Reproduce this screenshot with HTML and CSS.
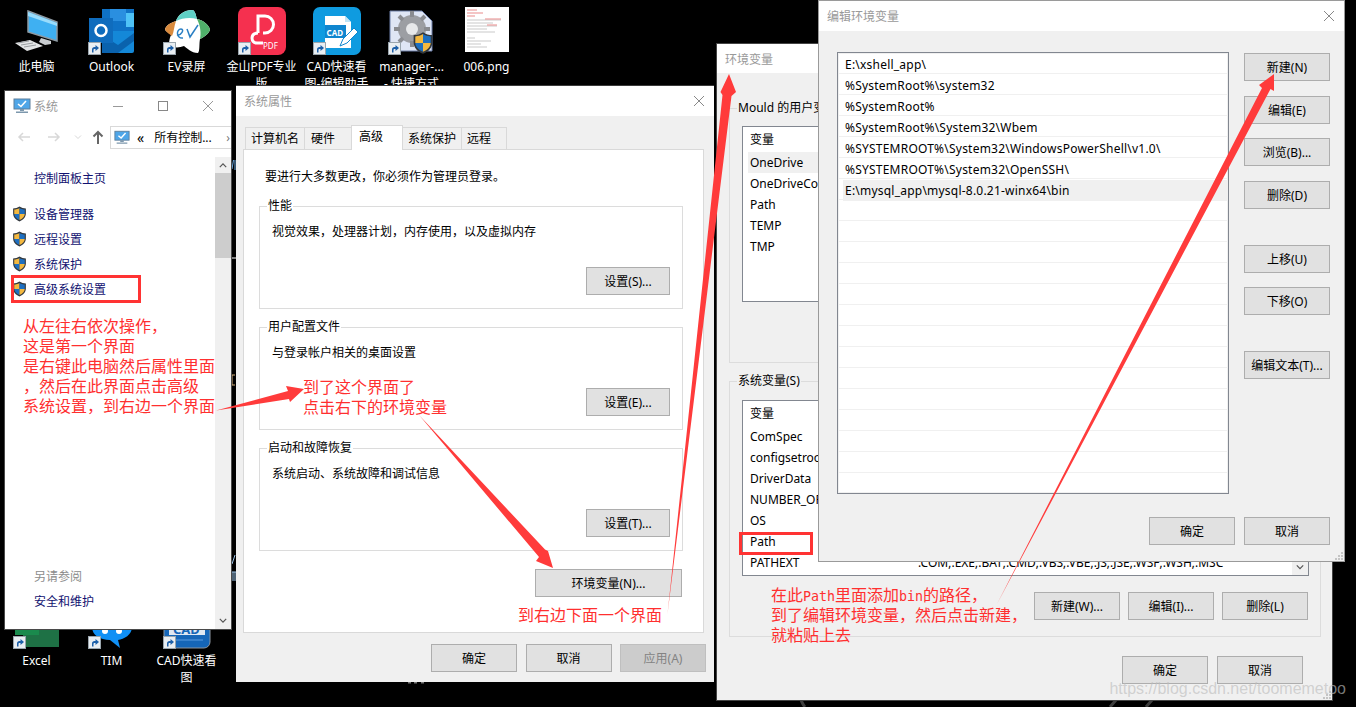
FILE: index.html
```html
<!DOCTYPE html>
<html lang="zh-CN">
<head>
    <meta charset="UTF-8">
    <title>系统属性 - 环境变量</title>
    <link rel="stylesheet" href="styles.css">
</head>
<body>
<svg class="defs" width="0" height="0">
    <defs>
        <symbol id="shield" viewBox="0 0 16 17">
            <path d="M8 .6C6 2 3.600 2.700 1.200 2.700V8c0 4 2.800 6.800 6.800 8.400 4-1.600 6.800-4.400 6.800-8.400V2.700C12.400 2.700 10 2 8 .6z" fill="#33383d"/>
            <path d="M8 2v6.500H2.400V3.700C4.400 3.600 6.400 3 8 2z" fill="#f4b83f"/>
            <path d="M8 2c1.600 1 3.600 1.600 5.600 1.700v4.800H8z" fill="#1e6fc0"/>
            <path d="M2.400 8.500H8v6.400C4.800 13.500 2.600 11.500 2.400 8.500z" fill="#1e6fc0"/>
            <path d="M8 8.500h5.600c-.2 3-2.400 5-5.600 6.400z" fill="#f4b83f"/>
        </symbol>
        <symbol id="monitor" viewBox="0 0 18 16">
            <rect x="1" y="1" width="16" height="10" fill="#4fa6e8" stroke="#5d7f9c"/>
            <path d="M5 6l3 2.500L13 3" fill="none" stroke="#fff" stroke-width="1.600"/>
            <path d="M7 11h4v2H7zM3 13.500h12v1.500H3z" fill="#7d98ad"/>
        </symbol>
        <symbol id="shortcut" viewBox="0 0 13 13">
            <rect x=".5" y=".5" width="12" height="12" fill="#e9eef2" stroke="#9aa5ad"/>
            <path d="M4 10.500V7.500c0-1.500 1-2.500 2.500-2.500H7.500V3l3.500 3-3.500 3V7H6.500C5.800 7 5.500 7.500 5.500 8.200v2.300z" fill="#1c5fa8"/>
        </symbol>
    </defs>
</svg>

<div class="desktop">
    <!-- bits of the wallpaper and of other icons that show between the windows -->
    <svg class="wallpaper" viewBox="0 0 1356 707">
        <path d="M233.500 160l-1.500 9M235 160v10" stroke="#6aa8e0" fill="none"/>
        <path d="M232 258h4" stroke="#fff"/>
        <path d="M235 375h-3v10h3" stroke="#d9b27a" fill="none"/>
        <path d="M235 555l-3 9M232 572h4M233 572v9M235 572v9" stroke="#9cc4e8" fill="none"/>
        <path d="M408 682.800h3M414 682.800h3M421 682.800h3" stroke="#777" stroke-width="1.500"/>
        <path d="M801 700c1 2 2 5 4 7" stroke="#3d3d3d" stroke-width="3" fill="none"/>
        <path d="M1116 700l-6 7M1152 700l-6 7" stroke="#3d3d3d" stroke-width="3" fill="none"/>
    </svg>

    <!-- desktop icons, top row -->
    <div class="icon-grid icon-grid-top">
        <div class="desk-icon">
            <svg class="desk-pic" viewBox="0 0 48 48">
                <path d="M15 4l29 11v19L15 25z" fill="#3fb0f2" stroke="#8e9aa3" stroke-width="1.500"/>
                <path d="M15 5l29 11v3L15 9z" fill="#9adcfb"/>
                <path d="M28 31l10 3v3l-6 1-6-3z" fill="#c9cdd0"/>
                <path d="M2 36l15-3 13 6-16 5z" fill="#e3e5e6"/>
                <path d="M5 36l11-2M8 38l12-2M11 40l12-2" stroke="#9a9ea1"/>
            </svg>
            <span class="desk-label">此电脑</span>
        </div>
        <div class="desk-icon">
            <svg class="desk-pic" viewBox="0 0 48 48">
                <rect x="14" y="2" width="32" height="24" fill="#0f72c6"/>
                <rect x="22" y="2" width="16" height="12" fill="#2a8fe0"/>
                <rect x="38" y="6" width="8" height="14" fill="#4fc3f7"/>
                <path d="M14 24h32v20a2 2 0 0 1-2 2H14z" fill="#1488d8"/>
                <path d="M14 28l16 10 16-12v8L30 46H14z" fill="#0a62ad"/>
                <rect x="1" y="11" width="24" height="25" fill="#0f6cbd"/>
                <circle cx="13" cy="23.500" r="5.500" fill="none" stroke="#fff" stroke-width="2.500"/>
            </svg>
            <svg class="desk-badge"><use href="#shortcut"/></svg>
            <span class="desk-label">Outlook</span>
        </div>
        <div class="desk-icon">
            <svg class="desk-pic" viewBox="0 0 48 48">
                <path d="M30 3c3 2 3 7 4 9 5 1 12 5 13 11-2 5-8 8-10 9-1 5 0 12-2 14-7 0-11-5-14-7-5 2-11 2-15-1 0-6 2-10 3-12C6 27 2 24 2 22c2-5 8-7 11-8 2-5 6-11 17-11z" fill="#fff"/>
                <path d="M2 22c2-5 8-7 11-8-2 5-2 11-4 15-3-2-7-5-7-7z" fill="#d98a3d"/>
                <path d="M37 32c1-5 1-12-3-20 5 1 12 5 13 11-2 5-8 8-10 9z" fill="#4fb06a"/>
                <path d="M30 3c3 2 3 7 4 9-7-2-15-1-21 2 2-5 6-11 17-11z" fill="#5fd0c5"/>
                <path d="M14 28c4 1 8-6 4-6-5 0-5 10 2 9M24 22l3 8 8-12" fill="none" stroke="#2a7fc4" stroke-width="1.500"/>
            </svg>
            <svg class="desk-badge"><use href="#shortcut"/></svg>
            <span class="desk-label">EV录屏</span>
        </div>
        <div class="desk-icon">
            <svg class="desk-pic" viewBox="0 0 48 48">
                <rect width="48" height="48" rx="8" fill="#f5304f"/>
                <path d="M20 26V9h7a8.500 8.500 0 0 1 0 17h-2" fill="none" stroke="#fff" stroke-width="3"/>
                <path d="M20 26c-4 0-6 2-6 5s2 5 5 5h6" fill="none" stroke="#fff" stroke-width="3"/>
                <text class="pic-pdf" x="25" y="42">PDF</text>
            </svg>
            <svg class="desk-badge"><use href="#shortcut"/></svg>
            <span class="desk-label">金山PDF专业版</span>
        </div>
        <div class="desk-icon">
            <svg class="desk-pic" viewBox="0 0 48 48">
                <rect width="48" height="48" rx="7" fill="#0f9be0"/>
                <path d="M12 9h20l6 6v26H12z" fill="#fff"/>
                <path d="M32 9v6h6z" fill="#bfe3f6"/>
                <rect x="12" y="18" width="21" height="13" fill="#0f86cf"/>
                <text class="pic-cad" x="13.500" y="28.500">CAD</text>
                <path d="M27 39l3-7 11-11 4 4-11 11z" fill="#fff" stroke="#0f86cf"/>
            </svg>
            <svg class="desk-badge"><use href="#shortcut"/></svg>
            <span class="desk-label">CAD快速看图-编辑助手</span>
        </div>
        <div class="desk-icon">
            <svg class="desk-pic" viewBox="0 0 48 48">
                <path d="M2 4h32l10 10v30H2z" fill="#dfe6f5" stroke="#6d7ea8"/>
                <circle cx="24" cy="22" r="14" fill="#9c9ea3"/>
                <circle cx="24" cy="22" r="6" fill="#e7e8ea"/>
                <path d="M24 4v6M24 34v6M6 22h6M36 22h6M11 9l4 4M33 31l4 4M37 9l-4 4M15 31l-4 4" stroke="#8a8c91" stroke-width="4"/>
                <use href="#shield" x="24" y="24" width="22" height="24"/>
            </svg>
            <svg class="desk-badge"><use href="#shortcut"/></svg>
            <span class="desk-label">manager-...<br>- 快捷方式</span>
        </div>
        <div class="desk-icon">
            <svg class="desk-pic" viewBox="0 0 48 48">
                <rect x="2" y="0" width="44" height="45" fill="#fff"/>
                <path d="M4 3h10M4 6h16M4 9h8" stroke="#e98b8b"/>
                <path d="M4 13h34M4 16h26M4 19h30M4 22h20M4 25h28M4 31h8M4 34h24M4 37h14M4 40h20" stroke="#c9c9c9"/>
                <path d="M22 12h16M24 18h10" stroke="#e98b8b"/>
            </svg>
            <span class="desk-label">006.png</span>
        </div>
    </div>

    <!-- desktop icons, bottom row -->
    <div class="icon-grid icon-grid-bottom">
        <div class="desk-icon">
            <svg class="desk-pic" viewBox="0 0 48 48">
                <rect x="10" y="0" width="36" height="46" fill="#1e7145"/>
                <rect x="28" y="12" width="18" height="10" fill="#27915a"/>
                <rect x="2" y="6" width="24" height="28" fill="#1a8a4d"/>
            </svg>
            <svg class="desk-badge"><use href="#shortcut"/></svg>
            <span class="desk-label">Excel</span>
        </div>
        <div class="desk-icon">
            <svg class="desk-pic" viewBox="0 0 48 48">
                <path d="M4 26C4 12 12 2 24 2s20 10 20 24c0 8-8 12-14 13l2 8-10-8C12 39 4 34 4 26z" fill="#1090f5"/>
                <circle cx="17" cy="30" r="3" fill="#fff"/>
                <circle cx="31" cy="30" r="3" fill="#fff"/>
            </svg>
            <svg class="desk-badge"><use href="#shortcut"/></svg>
            <span class="desk-label">TIM</span>
        </div>
        <div class="desk-icon">
            <svg class="desk-pic" viewBox="0 0 48 48">
                <rect x="1" y="0" width="46" height="47" rx="6" fill="#1566b8" stroke="#8d96a0"/>
                <rect x="6" y="22" width="36" height="12" fill="#dfe8f2"/>
                <text class="pic-cad-big" x="10" y="33">CAD</text>
                <path d="M8 39h32" stroke="#5b9be0"/>
            </svg>
            <svg class="desk-badge"><use href="#shortcut"/></svg>
            <span class="desk-label">CAD快速看<br>图</span>
        </div>
    </div>

    <!-- 系统 -->
    <section class="win win-system">
        <header class="titlebar titlebar-system">
            <svg class="title-icon"><use href="#monitor"/></svg>
            <span class="title">系统</span>
            <span class="caption-btns">
                <svg class="cap-icon" viewBox="0 0 12 12"><path d="M1 6.500h10" stroke="#999"/></svg>
                <svg class="cap-icon" viewBox="0 0 12 12"><rect x="1.500" y="1.500" width="9" height="9" fill="none" stroke="#888"/></svg>
                <svg class="cap-icon" viewBox="0 0 12 12"><path d="M1 1l10 10M11 1L1 11" stroke="#999"/></svg>
            </span>
        </header>
        <nav class="navbar">
            <svg class="nav-arrow" viewBox="0 0 14 12"><path d="M13 6H2M6 2L2 6l4 4" fill="none" stroke="#d8d8d8" stroke-width="1.500"/></svg>
            <svg class="nav-arrow" viewBox="0 0 14 12"><path d="M1 6h11M8 2l4 4-4 4" fill="none" stroke="#d8d8d8" stroke-width="1.500"/></svg>
            <svg class="nav-chevron" viewBox="0 0 8 6"><path d="M1 1.500l3 3 3-3" fill="none" stroke="#d8d8d8"/></svg>
            <svg class="nav-up" viewBox="0 0 12 14"><path d="M6 14V2M1.500 6.500L6 2l4.500 4.500" fill="none" stroke="#666" stroke-width="2"/></svg>
            <div class="address">
                <svg class="address-icon"><use href="#monitor"/></svg>
                <span class="crumb-more">«</span>
                <span class="crumb">所有控制...</span>
                <span class="crumb-next">›</span>
            </div>
        </nav>
        <div class="system-body">
            <div class="sidebar">
                <a class="side-home">控制面板主页</a>
                <a class="side-item"><svg class="shield"><use href="#shield"/></svg>设备管理器</a>
                <a class="side-item"><svg class="shield"><use href="#shield"/></svg>远程设置</a>
                <a class="side-item"><svg class="shield"><use href="#shield"/></svg>系统保护</a>
                <a class="side-item"><svg class="shield"><use href="#shield"/></svg>高级系统设置</a>
                <div class="side-foot">
                    <span class="side-seealso">另请参阅</span>
                    <a class="side-link">安全和维护</a>
                </div>
            </div>
            <div class="scrollbar">
                <svg class="scroll-arrow" viewBox="0 0 10 6"><path d="M1 5l4-4 4 4" fill="none" stroke="#555" stroke-width="1.500"/></svg>
                <div class="scroll-thumb"></div>
                <svg class="scroll-arrow scroll-arrow-down" viewBox="0 0 10 6"><path d="M1 1l4 4 4-4" fill="none" stroke="#555" stroke-width="1.500"/></svg>
            </div>
        </div>
    </section>

    <!-- 系统属性 -->
    <section class="win win-props">
        <header class="titlebar">
            <span class="title">系统属性</span>
            <svg class="cap-close" viewBox="0 0 12 12"><path d="M1 1l10 10M11 1L1 11" stroke="#888"/></svg>
        </header>
        <div class="tabs">
            <span class="tab tab-name">计算机名</span>
            <span class="tab tab-hw">硬件</span>
            <span class="tab tab-active">高级</span>
            <span class="tab tab-name">系统保护</span>
            <span class="tab tab-remote">远程</span>
        </div>
        <div class="panel">
            <p class="panel-note">要进行大多数更改，你必须作为管理员登录。</p>
            <fieldset class="group">
                <legend>性能</legend>
                <p class="group-text">视觉效果，处理器计划，内存使用，以及虚拟内存</p>
                <button class="btn group-btn">设置(S)...</button>
            </fieldset>
            <fieldset class="group">
                <legend>用户配置文件</legend>
                <p class="group-text">与登录帐户相关的桌面设置</p>
                <button class="btn group-btn">设置(E)...</button>
            </fieldset>
            <fieldset class="group">
                <legend>启动和故障恢复</legend>
                <p class="group-text">系统启动、系统故障和调试信息</p>
                <button class="btn group-btn">设置(T)...</button>
            </fieldset>
            <div class="env-row">
                <button class="btn btn-env">环境变量(N)...</button>
            </div>
        </div>
        <footer class="props-foot">
            <button class="btn">确定</button>
            <button class="btn">取消</button>
            <button class="btn btn-off">应用(A)</button>
        </footer>
    </section>

    <!-- 环境变量 -->
    <section class="win win-env">
        <header class="titlebar">
            <span class="title">环境变量</span>
        </header>
        <div class="env-body">
            <fieldset class="env-group env-group-user">
                <legend>Mould 的用户变量(U)</legend>
                <div class="var-list var-list-user">
                    <div class="var-row var-head"><span>变量</span></div>
                    <div class="var-row var-picked"><span>OneDrive</span></div>
                    <div class="var-row"><span>OneDriveConsumer</span></div>
                    <div class="var-row"><span>Path</span></div>
                    <div class="var-row"><span>TEMP</span></div>
                    <div class="var-row"><span>TMP</span></div>
                </div>
            </fieldset>
            <fieldset class="env-group env-group-sys">
                <legend>系统变量(S)</legend>
                <div class="var-list var-list-sys">
                    <div class="var-row var-head"><span>变量</span></div>
                    <div class="var-row"><span>ComSpec</span></div>
                    <div class="var-row"><span>configsetroot</span></div>
                    <div class="var-row"><span>DriverData</span></div>
                    <div class="var-row"><span>NUMBER_OF_PROCESSORS</span></div>
                    <div class="var-row"><span>OS</span></div>
                    <div class="var-row"><span>Path</span></div>
                    <div class="var-row"><span>PATHEXT</span><span class="var-val">.COM;.EXE;.BAT;.CMD;.VBS;.VBE;.JS;.JSE;.WSF;.WSH;.MSC</span></div>
                    <svg class="list-down" viewBox="0 0 10 6"><path d="M1 1l4 4 4-4" fill="none" stroke="#555" stroke-width="1.500"/></svg>
                </div>
                <div class="sys-btns">
                    <button class="btn">新建(W)...</button>
                    <button class="btn">编辑(I)...</button>
                    <button class="btn">删除(L)</button>
                </div>
            </fieldset>
            <div class="env-foot">
                <button class="btn">确定</button>
                <button class="btn">取消</button>
            </div>
        </div>
        <svg class="grip" viewBox="0 0 8 8"><path d="M6 0h2v2H6zM3 3h2v2H3zM6 3h2v2H6zM0 6h2v2H0zM3 6h2v2H3zM6 6h2v2H6z" fill="#c4c4c4"/></svg>
    </section>

    <!-- 编辑环境变量 -->
    <section class="win win-edit">
        <header class="titlebar">
            <span class="title">编辑环境变量</span>
            <svg class="cap-close" viewBox="0 0 12 12"><path d="M1 1l10 10M11 1L1 11" stroke="#888"/></svg>
        </header>
        <div class="edit-body">
            <div class="edit-left">
                <div class="path-list">
                    <div class="path-row">E:\xshell_app\</div>
                    <div class="path-row">%SystemRoot%\system32</div>
                    <div class="path-row">%SystemRoot%</div>
                    <div class="path-row">%SystemRoot%\System32\Wbem</div>
                    <div class="path-row">%SYSTEMROOT%\System32\WindowsPowerShell\v1.0\</div>
                    <div class="path-row">%SYSTEMROOT%\System32\OpenSSH\</div>
                    <div class="path-row path-picked">E:\mysql_app\mysql-8.0.21-winx64\bin</div>
                </div>
            </div>
            <div class="edit-side">
                <div class="side-btns">
                    <button class="btn">新建(N)</button>
                    <button class="btn">编辑(E)</button>
                    <button class="btn">浏览(B)...</button>
                    <button class="btn">删除(D)</button>
                </div>
                <div class="side-btns side-btns-move">
                    <button class="btn">上移(U)</button>
                    <button class="btn">下移(O)</button>
                </div>
                <button class="btn btn-text">编辑文本(T)...</button>
            </div>
        </div>
        <div class="edit-foot">
            <button class="btn">确定</button>
            <button class="btn">取消</button>
        </div>
        <svg class="grip" viewBox="0 0 8 8"><path d="M6 0h2v2H6zM3 3h2v2H3zM6 3h2v2H6zM0 6h2v2H0zM3 6h2v2H3zM6 6h2v2H6z" fill="#c4c4c4"/></svg>
    </section>

    <!-- red marks drawn on the screenshot -->
    <div class="mark-box mark-box-adv"></div>
    <div class="mark-box mark-box-path"></div>

    <svg class="arrows" viewBox="0 0 1356 707">
        <path d="M216 410.500L288 391 286 386 304 389 290 402 289 399z"/>
        <path d="M419 415L545 549.500 548 551 553 568 536 561 539 557z"/>
        <path d="M667.500 614L722.500 95 720.500 92 729 74 736 92 731.500 96z"/>
        <path d="M997 604L1262 88 1259 85 1274 74 1274 91 1270.500 89z"/>
    </svg>

    <p class="note note-first">从左往右依次操作，<br>这是第一个界面<br>是右键此电脑然后属性里面<br>，然后在此界面点击高级<br>系统设置，到右边一个界面</p>
    <p class="note note-second">到了这个界面了<br>点击右下的环境变量</p>
    <p class="note note-third">到右边下面一个界面</p>
    <p class="note note-fourth">在此<span class="note-mono">Path</span>里面添加<span class="note-mono">bin</span>的路径，<br>到了编辑环境变量，然后点击新建，<br>就粘贴上去</p>

    <span class="watermark">https://blog.csdn.net/toomemetoo</span>
</div>
</body>
</html>
```

FILE: styles.css
```css
* {
    box-sizing: border-box;
}
html, body {
    margin: 0;
    height: 100%;
    background: #000;
    overflow: hidden;
}
body {
    font-family: "Noto Sans", "Noto Sans CJK SC", sans-serif;
    font-size: 12px;
    color: #000;
}
p {
    margin: 0;
}
.defs {
    position: absolute;
}
.desktop {
    position: relative;
    width: 1356px;
    height: 707px;
    overflow: hidden;
    background: #000;
}
.wallpaper {
    position: absolute;
    left: 0;
    top: 0;
    width: 1356px;
    height: 707px;
}

/* desktop icons */
.icon-grid {
    position: absolute;
    left: -1px;
    display: flex;
}
.icon-grid-top {
    top: 7px;
}
.icon-grid-bottom {
    top: 601px;
}
.desk-icon {
    position: relative;
    width: 75px;
    display: flex;
    flex-direction: column;
    align-items: center;
}
.desk-pic {
    width: 48px;
    height: 48px;
}
.desk-badge {
    position: absolute;
    left: 14px;
    top: 35px;
    width: 13px;
    height: 13px;
}
.desk-label {
    width: 75px;
    margin-top: 3px;
    color: #fff;
    text-align: center;
    line-height: 17px;
}
.pic-pdf {
    font-size: 8px;
    fill: #fff;
}
.pic-cad {
    font-size: 8px;
    font-weight: bold;
    fill: #fff;
}
.pic-cad-big {
    font-size: 13px;
    font-weight: bold;
    fill: #1566b8;
}

/* windows */
.win {
    position: absolute;
    display: flex;
    flex-direction: column;
    background: #f0f0f0;
}
.win-system {
    left: 4px;
    top: 90px;
    width: 228px;
    height: 540px;
    background: #fff;
    border: 1px solid #4a4a4a;
}
.win-props {
    left: 236px;
    top: 85px;
    width: 478px;
    height: 597px;
    border-top: 1px solid #3a3a3a;
}
.win-env {
    left: 716px;
    top: 43px;
    width: 617px;
    height: 658px;
    border: 1px solid #444;
}
.win-env .titlebar {
    height: 29px;
}
.win-edit {
    left: 818px;
    top: 0;
    width: 527px;
    height: 562px;
    border: 1px solid #9a9a9a;
}
.win-edit .titlebar {
    padding-bottom: 1px;
}
.titlebar {
    flex: none;
    height: 30px;
    padding: 0 8px;
    display: flex;
    align-items: center;
    background: #fff;
}
.title {
    color: #999;
}
.cap-close {
    width: 12px;
    height: 12px;
    margin-left: auto;
    margin-right: 1px;
}
.btn {
    flex: none;
    width: 86px;
    height: 28px;
    padding: 0;
    border: 1px solid #adadad;
    background: #e1e1e1;
    font: inherit;
    color: #000;
}
.btn-off {
    background: #cccccc;
    border-color: #bfbfbf;
    color: #838383;
}
.grip {
    position: absolute;
    right: 1px;
    bottom: 1px;
    width: 8px;
    height: 8px;
}

/* 系统 window */
.titlebar-system {
    padding: 0 0 1px 8px;
}
.title-icon {
    width: 18px;
    height: 16px;
    margin-right: 3px;
}
.caption-btns {
    margin-left: auto;
    display: flex;
    gap: 33px;
    padding-right: 17px;
}
.cap-icon {
    width: 12px;
    height: 12px;
}
.navbar {
    flex: none;
    height: 36px;
    padding-bottom: 4px;
    padding-left: 12px;
    display: flex;
    align-items: center;
}
.nav-arrow {
    width: 14px;
    height: 12px;
    margin-right: 16px;
}
.nav-chevron {
    width: 8px;
    height: 6px;
    margin-left: -3px;
    margin-right: 10px;
}
.nav-up {
    width: 12px;
    height: 14px;
    margin-right: 6px;
}
.address {
    flex: 1;
    height: 23px;
    display: flex;
    align-items: center;
    border: 1px solid #d9d9d9;
    border-right: 0;
    padding-left: 3px;
}
.address-icon {
    width: 16px;
    height: 15px;
    margin-right: 7px;
}
.crumb-more {
    font-size: 14px;
    margin-right: 10px;
}
.crumb-next {
    margin-left: auto;
    margin-right: 1px;
    color: #777;
}
.system-body {
    flex: 1;
    display: flex;
    min-height: 0;
}
.sidebar {
    flex: 1;
    display: flex;
    flex-direction: column;
    color: #111170;
    padding-top: 14px;
    padding-left: 7px;
}
.side-home {
    padding-left: 22px;
    height: 16px;
    line-height: 16px;
    margin-bottom: 14px;
}
.side-item {
    height: 25px;
    display: flex;
    align-items: center;
}
.shield {
    width: 15px;
    height: 16px;
    margin-right: 7px;
}
.side-foot {
    margin-top: auto;
    padding: 0 0 19px 22px;
    display: flex;
    flex-direction: column;
    gap: 9px;
}
.side-seealso {
    color: #8c8c8c;
    line-height: 16px;
}
.side-link {
    line-height: 16px;
}
.scrollbar {
    flex: none;
    width: 16px;
    background: #f0f0f0;
    display: flex;
    flex-direction: column;
    align-items: center;
}
.scroll-arrow {
    flex: none;
    width: 8px;
    height: 5px;
    margin: 6px 0 5px;
}
.scroll-arrow-down {
    margin: auto 0 6px;
}
.scroll-thumb {
    width: 16px;
    height: 85px;
    background: #cdcdcd;
}

/* 系统属性 window */
.tabs {
    flex: none;
    display: flex;
    align-items: flex-end;
    height: 33px;
    padding-left: 10px;
}
.tab {
    height: 22px;
    line-height: 20px;
    padding: 1px 0 0 5px;
    border: 1px solid #d9d9d9;
    border-bottom: 0;
    margin-left: -1px;
}
.tab-name {
    width: 60px;
}
.tab-hw {
    width: 48px;
    padding-left: 6px;
}
.tab-remote {
    width: 46px;
}
.tab-active {
    position: relative;
    z-index: 1;
    width: 52px;
    height: 25px;
    padding: 0 0 0 7px;
    margin-bottom: -1px;
    background: #fff;
    line-height: 22px;
}
.panel {
    flex: none;
    width: 461px;
    height: 484px;
    margin-left: 7px;
    padding: 19px 21px 0 15px;
    background: #fff;
    border: 1px solid #d9d9d9;
}
.panel-note {
    padding-left: 6px;
    line-height: 16px;
    margin-bottom: 13px;
}
.group {
    margin: 0 0 10px;
    padding: 0;
    width: 424px;
    height: 111px;
    border: 1px solid #dcdcdc;
}
.group:last-of-type {
    margin-bottom: 0;
}
.group legend {
    margin-left: 7px;
    padding: 0 1px;
    line-height: 16px;
}
.group-text {
    padding: 10px 0 0 12px;
    line-height: 16px;
}
.group-btn {
    display: block;
    margin: 27px 12px 0 auto;
    width: 84px;
}
.env-row {
    display: flex;
    justify-content: flex-end;
    margin-top: 18px;
}
.btn-env {
    width: 147px;
}
.props-foot {
    display: flex;
    justify-content: flex-end;
    gap: 8.500px;
    padding: 11px 8px 0 0;
}

/* 环境变量 window */
.env-body {
    flex: 1;
    padding: 27px 11px 0 12px;
    min-height: 0;
}
.env-group {
    margin: 0;
    padding: 0 0 0 12px;
    border: 1px solid #dcdcdc;
}
.env-group legend {
    margin-left: -5px;
    padding: 0 1px;
    line-height: 16px;
}
.env-group-user {
    height: 263px;
    margin-bottom: 10px;
}
.env-group-sys {
    height: 264px;
}
.var-list {
    position: relative;
    width: 567px;
    height: 176px;
    background: #fff;
    border: 1px solid #828790;
}
.var-list-user {
    margin-top: 10px;
}
.var-list-sys {
    margin-top: 11px;
}
.var-row {
    display: flex;
    height: 21px;
    line-height: 21px;
    padding-left: 7px;
}
.var-head {
    height: 25px;
    line-height: 25px;
}
.var-picked {
    background: #f0f0f0;
    margin-left: 5px;
    padding-left: 2px;
}
.var-val {
    position: absolute;
    left: 175px;
}
.list-down {
    position: absolute;
    right: 0;
    bottom: 0;
    width: 16px;
    height: 16px;
    padding: 5px 4px;
    background: #f0f0f0;
}
.sys-btns {
    display: flex;
    gap: 8px;
    justify-content: flex-end;
    margin: 16px 12px 0 0;
}
.env-foot {
    display: flex;
    gap: 9px;
    justify-content: flex-end;
    padding: 19px 18px 0 0;
}

/* 编辑环境变量 window */
.edit-body {
    display: flex;
    padding: 21px 14px 0 18px;
}
.edit-left {
    flex: none;
    width: 392px;
    margin-right: 15px;
}
.path-list {
    height: 442px;
    padding: 1px;
    background-color: #fff;
    background-image: repeating-linear-gradient(to bottom, transparent 0, transparent 20px, #f0f0f0 20px, #f0f0f0 21px);
    background-clip: content-box;
    border: 1px solid #828790;
}
.path-row {
    height: 21px;
    line-height: 21px;
    padding-left: 6px;
    letter-spacing: .22px;
}
.path-picked {
    background: #f0f0f0;
    margin-left: 4px;
    padding-left: 2px;
}
.edit-side {
    flex: none;
    display: flex;
    flex-direction: column;
    padding-top: 1px;
}
.side-btns {
    display: flex;
    flex-direction: column;
    gap: 14.500px;
}
.side-btns-move {
    margin-top: 36px;
}
.btn-text {
    margin-top: 36px;
}
.edit-foot {
    display: flex;
    gap: 9px;
    justify-content: flex-end;
    padding: 23px 14px 0 0;
}

/* annotations */
.mark-box {
    position: absolute;
    border: 3px solid #f33;
}
.mark-box-adv {
    left: 11px;
    top: 275px;
    width: 130px;
    height: 28px;
}
.mark-box-path {
    left: 739px;
    top: 532px;
    width: 74px;
    height: 23px;
}
.arrows {
    position: absolute;
    left: 0;
    top: 0;
    width: 1356px;
    height: 707px;
    pointer-events: none;
}
.arrows path {
    fill: #ff3b3b;
}
.note {
    position: absolute;
    color: #ff2f2f;
    font-size: 16px;
    line-height: 20px;
    font-family: "Noto Sans CJK SC", sans-serif;
    white-space: nowrap;
}
.note-first {
    left: 23px;
    top: 315px;
}
.note-second {
    left: 303px;
    top: 376px;
}
.note-third {
    left: 518px;
    top: 604px;
}
.note-fourth {
    left: 771px;
    top: 584px;
}
.note-mono {
    font-family: "DejaVu Sans Mono", monospace;
    font-size: 13.300px;
    line-height: 0;
}
.watermark {
    position: absolute;
    right: 10px;
    top: 680px;
    font-family: "Liberation Sans", sans-serif;
    font-size: 16px;
    color: rgba(190, 190, 190, 0.65);
    white-space: nowrap;
}
```
